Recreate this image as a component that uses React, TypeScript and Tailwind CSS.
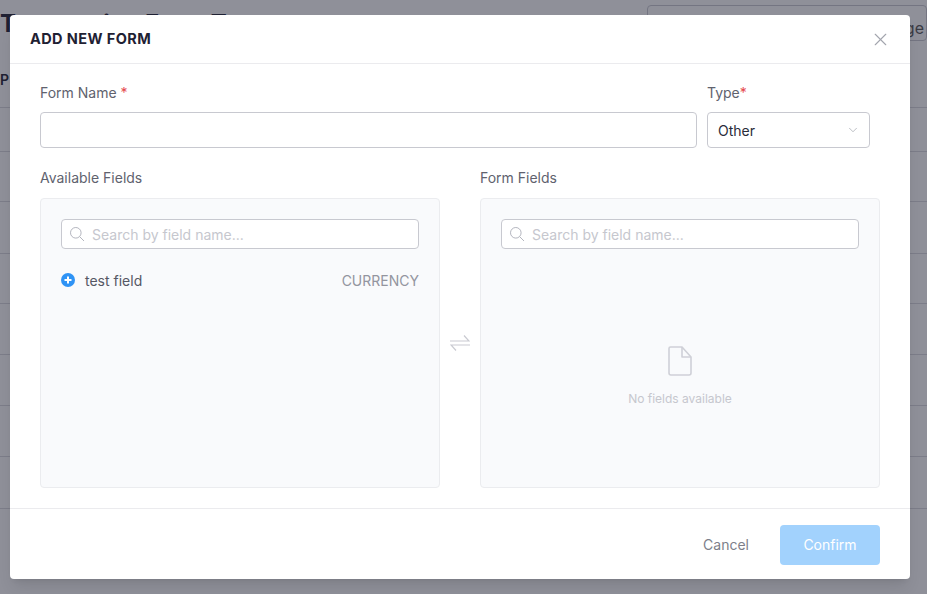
import React from "react";
import { ChevronDown, X, Search, FileText } from "lucide-react";

const rowHeights = [44, 50, 52, 50, 51, 51, 51, 52];

const SearchBox: React.FC = () => (
  <div className="flex items-center h-[30px] px-[7px] gap-[7px] bg-white border border-[#c8c9d0] rounded-[4px]">
    <svg width="16" height="16" viewBox="0 0 16 16" fill="none" stroke="#b4b6bf" strokeWidth="1">
      <circle cx="6.8" cy="6.8" r="5.3" />
      <path d="M10.6 10.6L15 15" />
    </svg>
    <span className="text-[14px] text-[#c6c7ce]">Search by field name...</span>
  </div>
);

const Background: React.FC = () => (
  <div className="h-[594px] overflow-hidden bg-white text-[#1f2133]">
    <div className="flex items-start justify-between h-[72px]">
      <div className="text-[24px] font-bold leading-none pt-[12px] whitespace-nowrap">Transaction Form Types</div>
      <div className="w-[280px] h-[36px] mt-[5px] border border-[#c8c9d0] rounded-[4px] text-[16px] text-right leading-[44px] text-[#555] whitespace-nowrap overflow-hidden">
        <span className="pr-[2px]">Manage</span>
      </div>
    </div>
    <div className="h-[36px] border-b border-[#d8d9de] text-[14px] font-semibold leading-[16px] pl-0">P</div>
    {rowHeights.map((h, i) => (
      <div key={i} style={{ height: h }} className="border-b border-[#d8d9de]" />
    ))}
    <div className="pl-[28px] pt-[18px] text-[14px]">Add</div>
  </div>
);

export default function App() {
  return (
    <div className="relative w-[927px] h-[594px] overflow-hidden font-['Inter',sans-serif]">
      <Background />
      <div className="absolute inset-0 bg-[#1f2133]/50 pt-[15px] pl-[10px]">
        <div className="w-[900px] h-[564px] bg-white rounded-[4px] flex flex-col shadow-lg">
          <div className="h-[49px] shrink-0 border-b border-[#ebebee] flex items-center justify-between pl-[20px] pr-[19px]">
            <h2 className="text-[14.5px] font-bold tracking-[0.4px] text-[#1f2133]">ADD NEW FORM</h2>
            <X size={21} strokeWidth={1.3} className="text-[#a3a5ae]" />
          </div>

          <div className="flex-1 px-[30px] pt-[20px]">
            <div className="flex gap-[10px]">
              <div className="w-[657px]">
                <div className="h-[18px] leading-[18px] text-[14px] text-[#60626e] mb-[10px]">
                  Form Name <span className="text-[#e5484d]">*</span>
                </div>
                <div className="h-[36px] border border-[#c8c9d0] rounded-[4px]" />
              </div>
              <div className="w-[163px]">
                <div className="h-[18px] leading-[18px] text-[14px] text-[#60626e] mb-[10px]">
                  Type<span className="text-[#e5484d]">*</span>
                </div>
                <div className="h-[36px] border border-[#c8c9d0] rounded-[4px] flex items-center justify-between pl-[10px] pr-[9px]">
                  <span className="text-[14px] text-[#2a2c3a]">Other</span>
                  <ChevronDown size={14} strokeWidth={1} className="text-[#8e909b]" />
                </div>
              </div>
            </div>

            <div className="flex mt-[21px]">
              <div className="w-[400px]">
                <div className="h-[18px] leading-[18px] text-[14px] text-[#60626e] mb-[11px]">Available Fields</div>
                <div className="h-[290px] bg-[#f9fafc] border border-[#ebecef] rounded-[4px] px-[20px] pt-[20px]">
                  <SearchBox />
                  <div className="flex items-center justify-between mt-[21px] h-[20px]">
                    <div className="flex items-center gap-[10px]">
                      <svg width="14" height="14" viewBox="0 0 14 14">
                        <circle cx="7" cy="7" r="7" fill="#2f93f5" />
                        <path d="M7 3.5V10.5M3.5 7H10.5" stroke="#fff" strokeWidth="2" />
                      </svg>
                      <span className="text-[14px] text-[#555764]">test field</span>
                    </div>
                    <span className="text-[14px] text-[#93959f]">CURRENCY</span>
                  </div>
                </div>
              </div>

              <div className="w-[40px] flex items-center justify-center pt-[29px]">
                <svg width="20" height="18" viewBox="0 0 20 18" fill="none" stroke="#c9cad1" strokeWidth="1.2">
                  <path d="M0 7H19L14 1.5" />
                  <path d="M20 11H1L6 16.5" />
                </svg>
              </div>

              <div className="w-[400px]">
                <div className="h-[18px] leading-[18px] text-[14px] text-[#60626e] mb-[11px]">Form Fields</div>
                <div className="h-[290px] bg-[#f9fafc] border border-[#ebecef] rounded-[4px] px-[20px] pt-[20px] flex flex-col">
                  <SearchBox />
                  <div className="flex flex-col items-center mt-[97px]">
                    <svg width="24" height="30" viewBox="0 0 24 30" fill="none" stroke="#cfd0d7" strokeWidth="1.6" strokeLinejoin="round">
                      <path d="M2.5 1H14L23 11V27a2 2 0 0 1-2 2H3a2 2 0 0 1-2-2V2.5A1.5 1.5 0 0 1 2.5 1Z" />
                      <path d="M14 1V11H23" />
                    </svg>
                    <span className="mt-[14px] text-[12px] text-[#c6c7ce]">No fields available</span>
                  </div>
                </div>
              </div>
            </div>
          </div>

          <div className="h-[71px] shrink-0 border-t border-[#ebebee] flex items-center justify-end pr-[30px] pt-[1px]">
            <span className="text-[14px] text-[#7d7f8a] mr-[31px]">Cancel</span>
            <button className="w-[100px] h-[40px] rounded-[4px] bg-[#a2d2fd] text-white text-[14px]">Confirm</button>
          </div>
        </div>
      </div>
    </div>
  );
}
